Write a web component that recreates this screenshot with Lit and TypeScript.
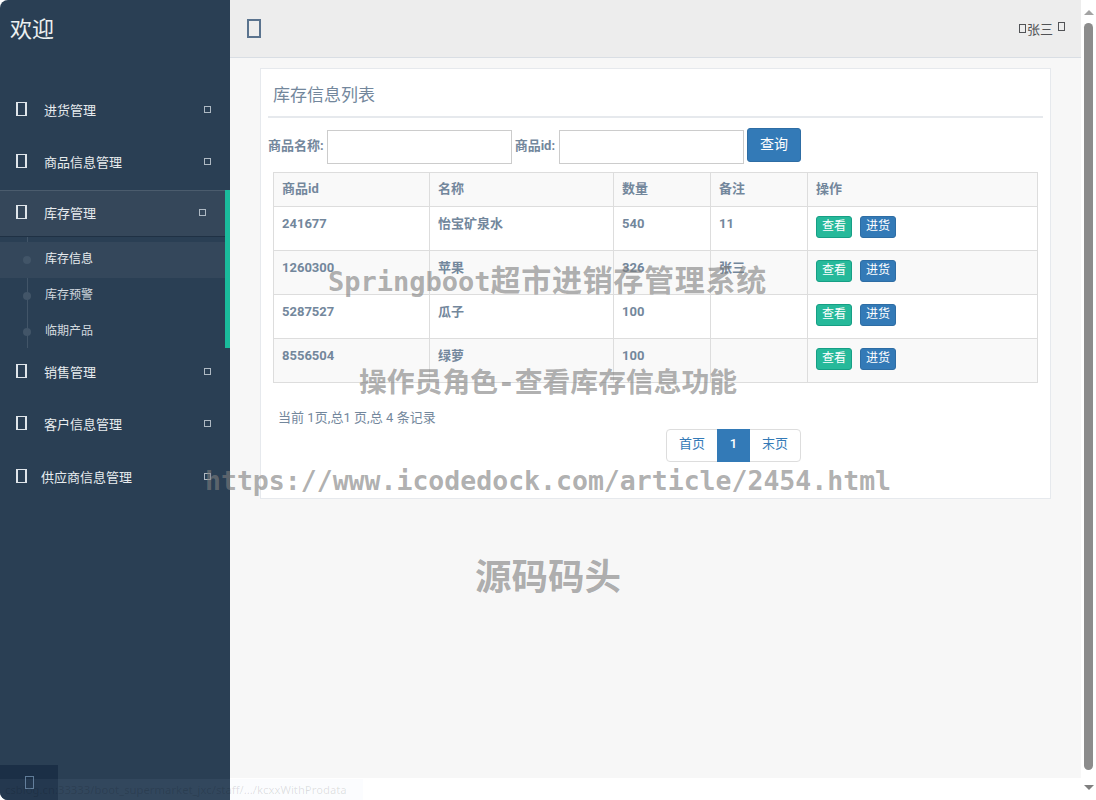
import { LitElement, html, css } from "lit";
import { customElement } from "lit/decorators.js";

const rows = [
  ["241677", "怡宝矿泉水", "540", "11"],
  ["1260300", "苹果", "326", "张三"],
  ["5287527", "瓜子", "100", ""],
  ["8556504", "绿萝", "100", ""],
];

@customElement("app-root")
export class AppRoot extends LitElement {
  static styles = css`
    :host { display: block; width: 1096px; height: 800px; overflow: hidden; position: relative; background: #fff; font-family: Roboto, "Noto Sans CJK SC", sans-serif; color: #73879c; font-size: 13px; }
    * { box-sizing: border-box; }
    .page { display: flex; height: 800px; }
    .side { width: 230px; flex: none; background: #2a3f54; color: #ecf0f1; border-radius: 8px 0 0 8px; position: relative; }
    .brand { height: 86px; padding: 11px 10px 0; font-size: 22px; line-height: 38px; color: #ecf0f1; }
    .item { height: 52px; display: flex; align-items: center; padding: 0 19px 2px 16px; font-size: 13px; position: relative; }
    .ico { width: 11px; height: 14px; border: solid #dfe5ea; border-width: 1px 2px; flex: none; margin: -5px 0 0; }
    .lab { margin-left: 17px; flex: 1; line-height: 18px; color: #e7ebee; }
    .lab.narrow { margin-left: 14px; }
    .chev { width: 7px; height: 7px; border: 1px solid #aeb9c3; flex: none; margin-top: -3px; }
    .group { border-right: 5px solid #1abb9c; height: 158px; }
    .group .item { height: 47px; padding-bottom: 0; padding-top: 1px; background: #35475a; border-top: 1px solid #4b5c6d; border-bottom: 1px solid #1f3144; }
    .sub { position: relative; padding-top: 5px; font-size: 12px; color: #d2d9df; height: 111px; }
    .sub::before { content: ""; position: absolute; left: 27px; top: 0; bottom: 0; width: 1px; background: #425568; }
    .sub div { height: 36px; line-height: 34px; padding-left: 45px; position: relative; }
    .sub div.on { background: #34475b; color: #e8ecef; }
    .sub div::before { content: ""; position: absolute; left: 23px; top: 14px; width: 8px; height: 8px; border-radius: 50%; background: #425568; }
    .last { margin-top: 1px; }
    .toggle { position: absolute; left: 0; bottom: 0; width: 58px; height: 35px; background: #1b2f46; display: flex; align-items: center; justify-content: center; border-radius: 0 0 0 8px; }
    .toggle i { display: block; width: 9px; height: 13px; border: 1px solid #5f7b97; }

    .main { flex: 1; min-width: 0; background: #f7f7f7; display: flex; flex-direction: column; }
    .top { height: 58px; flex: none; background: #ededed; border-bottom: 1px solid #d9dee4; display: flex; align-items: center; padding: 0 16px 0 17px; justify-content: space-between; }
    .burger { width: 14px; height: 19px; border: 2px solid #5a738e; }
    .user { display: flex; align-items: center; font-size: 13px; color: #515356; margin-top: -1px; }
    .user i { display: block; width: 7px; height: 9px; border: 1px solid #515356; }
    .user i:last-child { margin-left: 5px; margin-top: -3px; }
    .user span { margin-left: 1px; }

    .content { padding: 10px 30px; flex: 1; }
    .card { height: 431px; background: #fff; border: 1px solid #e6e9ed; padding: 0 7px; }
    .title { height: 49px; border-bottom: 2px solid #e6e9ed; font-size: 17px; line-height: 52px; padding-left: 5px; }
    .form { display: flex; align-items: flex-start; height: 54px; padding-top: 10px; }
    .form label { font-weight: 700; font-size: 13px; line-height: 36px; margin-right: 3px; white-space: nowrap; }
    .form label.second { margin-left: 3px; margin-right: 4px; }
    .form .inp { width: 185px; height: 34px; border: 1px solid #ccc; margin-top: 2px; background: #fff; }
    .form .btn { width: 54px; height: 34px; margin-left: 3px; background: #337ab7; border: 1px solid #2e6da4; border-radius: 3px; color: #fff; font-size: 14px; line-height: 31px; text-align: center; }
    table { border-collapse: collapse; table-layout: fixed; width: 764px; margin-left: 5px; font-weight: 700; font-size: 13px; }
    th, td { border: 1px solid #ddd; padding: 8px; text-align: left; vertical-align: top; line-height: 18.5px; }
    th { height: 34px; padding-top: 7px; padding-bottom: 7px; background: #f9f9f9; font-weight: 700; }
    td { height: 44px; }
    tr.odd td { background: #f9f9f9; }
    .b { display: inline-block; width: 36px; height: 22px; border-radius: 3px; color: #fff; font-size: 12px; font-weight: 400; line-height: 19px; text-align: center; margin: 1px 8px 0 0; vertical-align: top; }
    .b.g { background: #26b99a; border: 1px solid #169f85; }
    .b.bl { background: #337ab7; border: 1px solid #2e6da4; }
    .tot { font-weight: 400; font-size: 13px; margin: 26px 0 0 10px; line-height: 18px; letter-spacing: .05px; }
    .pager { display: flex; margin: 2px 0 0 398px; width: 135px; height: 33px; border: 1px solid #ddd; border-radius: 4px; line-height: 28px; text-align: center; color: #337ab7; font-size: 13px; }
    .pager span { width: 50px; }
    .pager span.cur { width: 33px; margin: -1px 0; background: #337ab7; color: #fff; line-height: 30px; font-weight: 500; }

    .bar { width: 15px; flex: none; background: #fff; display: flex; flex-direction: column; align-items: flex-start; padding: 10px 0 0 3px; }
    .up, .down { width: 0; height: 0; border-left: 5px solid transparent; border-right: 5px solid transparent; }
    .up { border-bottom: 5px solid #a3a3a3; }
    .down { border-top: 5px solid #7f7f7f; margin-top: 15px; }
    .thumb { width: 9px; height: 747px; margin-top: 8px; border-radius: 5px; background: #8c8c8c; }

    .wm { position: absolute; color: rgba(125,125,125,.62); font-weight: 700; white-space: nowrap; font-family: "Noto Sans CJK SC", sans-serif; line-height: 1; pointer-events: none; }
    .wm b { font-family: "DejaVu Sans Mono", monospace; }
    .w1 { left: 328px; top: 263px; font-size: 30px; letter-spacing: .7px; }
    .w1 b { font-size: 27px; letter-spacing: 0; }
    .w2 { left: 359px; top: 367px; font-size: 27.8px; }
    .w3 { left: 205px; top: 466px; font-size: 26.5px; }
    .w4 { left: 475px; top: 557px; font-size: 36.5px; }
    .stripw { position: absolute; left: 230px; bottom: 0; width: 851px; height: 22px; background: #fff; }
    .status { position: absolute; left: 0; bottom: 0; width: 363px; height: 21px; background: rgba(190,210,230,.06); border-radius: 0 0 0 8px; }
    .status p { margin: 0; padding: 0 0 0 5px; font-size: 11.3px; line-height: 21px; color: rgba(0,0,0,.12); white-space: nowrap; font-family: "Noto Sans", sans-serif; }
  `;

  private menu(label: string, narrow = false) {
    return html`<div class="item"><i class="ico"></i><span class="lab ${narrow ? "narrow" : ""}">${label}</span><i class="chev"></i></div>`;
  }

  render() {
    return html`
      <div class="page">
        <aside class="side">
          <div class="brand">欢迎</div>
          ${this.menu("进货管理")}
          ${this.menu("商品信息管理")}
          <div class="group">
            ${this.menu("库存管理")}
            <div class="sub">
              <div class="on">库存信息</div>
              <div>库存预警</div>
              <div>临期产品</div>
            </div>
          </div>
          ${this.menu("销售管理")}
          ${this.menu("客户信息管理")}
          <div class="last">${this.menu("供应商信息管理", true)}</div>
          <div class="toggle"><i></i></div>
        </aside>
        <main class="main">
          <header class="top">
            <div class="burger"></div>
            <div class="user"><i></i><span>张三</span><i></i></div>
          </header>
          <section class="content">
            <div class="card">
              <div class="title">库存信息列表</div>
              <div class="form">
                <label>商品名称:</label><div class="inp"></div>
                <label class="second">商品id:</label><div class="inp"></div>
                <div class="btn">查询</div>
              </div>
              <table>
                <colgroup><col style="width:156px"><col style="width:184px"><col style="width:97px"><col style="width:97px"><col style="width:230px"></colgroup>
                <thead><tr><th>商品id</th><th>名称</th><th>数量</th><th>备注</th><th>操作</th></tr></thead>
                <tbody>
                  ${rows.map((r, i) => html`<tr class="${i % 2 ? "odd" : ""}">
                    ${r.map((c) => html`<td>${c}</td>`)}
                    <td><span class="b g">查看</span><span class="b bl">进货</span></td>
                  </tr>`)}
                </tbody>
              </table>
              <div class="tot">当前 1页,总1 页,总 4 条记录</div>
              <div class="pager"><span>首页</span><span class="cur">1</span><span>末页</span></div>
            </div>
          </section>
        </main>
        <div class="bar"><div class="up"></div><div class="thumb"></div><div class="down"></div></div>
      </div>
      <div class="stripw"></div>
      <div class="status"><p>csblog.cn:33333/boot_supermarket_jxc/staff/.../kcxxWithProdata</p></div>
      <div class="wm w1"><b>Springboot</b>超市进销存管理系统</div>
      <div class="wm w2">操作员角色<b>-</b>查看库存信息功能</div>
      <div class="wm w3"><b>https://www.icodedock.com/article/2454.html</b></div>
      <div class="wm w4">源码码头</div>
    `;
  }
}
